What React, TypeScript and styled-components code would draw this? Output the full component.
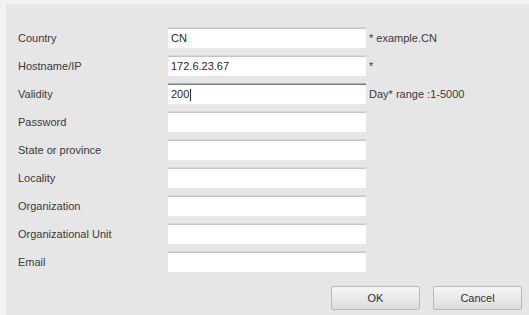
import * as React from 'react'
import styled, { createGlobalStyle } from 'styled-components'

const GlobalStyle = createGlobalStyle`
    html, body {
        margin: 0;
        padding: 0;
        background: #f3f3f3;
        font-family: "Liberation Sans", Arial, sans-serif;
    }
`

interface Field {
    label: string
    value?: string
    hint?: string
    focused?: boolean
}

const fields: Field[] = [
    { label: 'Country', value: 'CN', hint: '* example.CN' },
    { label: 'Hostname/IP', value: '172.6.23.67', hint: '*' },
    { label: 'Validity', value: '200', hint: 'Day* range :1-5000', focused: true },
    { label: 'Password' },
    { label: 'State or province' },
    { label: 'Locality' },
    { label: 'Organization' },
    { label: 'Organizational Unit' },
    { label: 'Email' },
]

const App: React.FC = () => (
    <>
        <GlobalStyle />
        <Panel>
            <Form>
                {fields.map((f) => (
                    <Row key={f.label}>
                        <Label>{f.label}</Label>
                        <Input $focused={f.focused}>
                            {f.value}
                            {f.focused && <Caret />}
                        </Input>
                        <Hint>{f.hint}</Hint>
                    </Row>
                ))}
            </Form>
            <Buttons>
                <Button>OK</Button>
                <Button>Cancel</Button>
            </Buttons>
        </Panel>
    </>
)

export default App

const Panel = styled.div`
    margin: 4px 0 0 6px;
    height: 311px;
    box-sizing: border-box;
    background: #e6e6e6;
    padding: 24px 7px 0 12px;
    display: flex;
    flex-direction: column;
`

const Form = styled.div`
    display: flex;
    flex-direction: column;
`

const Row = styled.div`
    display: grid;
    grid-template-columns: 150px 198px 1fr;
    height: 28px;
    align-items: start;
`

const Label = styled.div`
    font-size: 11px;
    color: #3a3a3a;
    line-height: 20px;
`

const Input = styled.div<{ $focused?: boolean }>`
    height: 20px;
    box-sizing: border-box;
    background: #fff;
    border-top: 1px solid ${(p) => (p.$focused ? '#6f7f8c' : '#c4c4c4')};
    box-shadow: 0 -1px 0 ${(p) => (p.$focused ? '#aab4bc' : '#d8d8d8')};
    padding: 0 3px;
    font-size: 11px;
    line-height: 19px;
    color: #2a2a2a;
    display: flex;
    align-items: center;
`

const Caret = styled.span`
    display: inline-block;
    width: 1px;
    height: 12px;
    background: #333;
    margin-left: 1px;
`

const Hint = styled.div`
    font-size: 11px;
    color: #3a3a3a;
    line-height: 20px;
    padding-left: 3px;
    white-space: nowrap;
`

const Buttons = styled.div`
    display: flex;
    justify-content: flex-end;
    gap: 13px;
    margin-top: 6px;
`

const Button = styled.button`
    width: 89px;
    height: 24px;
    border: 1px solid #b9b9b9;
    border-radius: 2px;
    background: linear-gradient(#f6f6f6, #dcdcdc);
    font-family: "Liberation Sans", Arial, sans-serif;
    font-size: 11px;
    color: #333;
    padding: 0;
`
